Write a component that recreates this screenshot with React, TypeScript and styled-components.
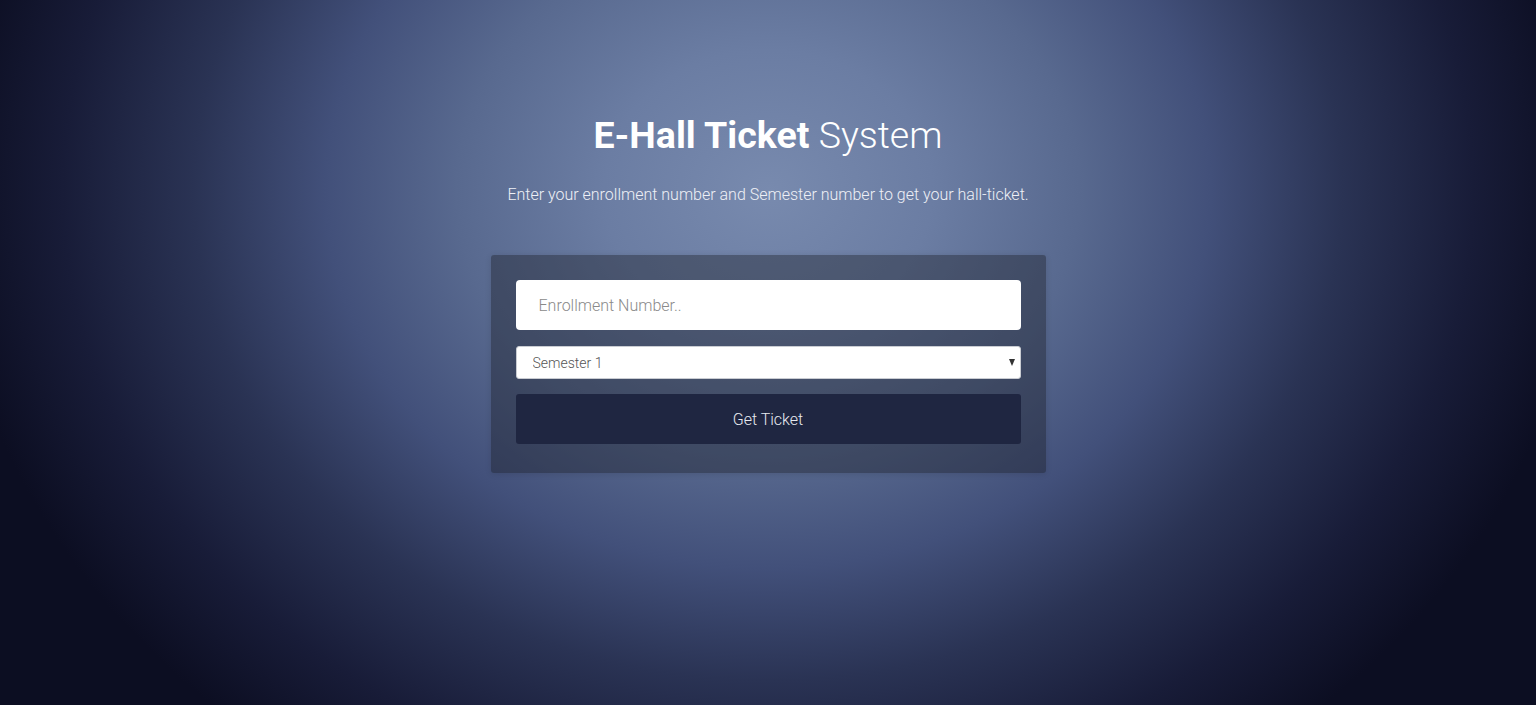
import React from "react";
import styled, { createGlobalStyle } from "styled-components";

const GlobalStyle = createGlobalStyle`
  html, body {
    margin: 0;
    padding: 0;
    height: 100%;
  }
  body {
    font-family: Roboto, "Liberation Sans", sans-serif;
    background: #0c0e22;
  }
  * { box-sizing: border-box; }
`;

const Page = styled.main`
  width: 100%;
  height: 705px;
  overflow: hidden;
  display: flex;
  flex-direction: column;
  align-items: center;
  padding-top: 112px;
  background:
    radial-gradient(
      ellipse 820px 700px at 50% 27%,
      #788aae 0%,
      #6b7da3 20%,
      #58698f 38%,
      #42507a 54%,
      #2a3354 70%,
      #181c38 86%,
      #0c0e22 100%
    );
`;

const Title = styled.h1`
  margin: 0;
  font-family: Roboto, "Liberation Sans", sans-serif;
  font-size: 37.5px;
  line-height: 46px;
  color: #ffffff;
  font-weight: 700;
  letter-spacing: 0;
`;

const Light = styled.span`
  font-weight: 300;
`;

const Subtitle = styled.p`
  margin: 27px 0 0;
  font-family: Roboto, "Liberation Sans", sans-serif;
  font-size: 16px;
  line-height: 20px;
  font-weight: 300;
  color: #eef0f6;
`;

const Card = styled.form`
  margin-top: 50px;
  width: 555px;
  padding: 25px 25px 29px;
  display: flex;
  flex-direction: column;
  gap: 16px;
  background: rgba(24, 27, 36, 0.4);
  border-radius: 3px;
  box-shadow: 0 1px 6px rgba(0, 0, 0, 0.12);
`;

const TextInput = styled.input`
  height: 50px;
  width: 100%;
  border: none;
  border-radius: 4px;
  background: #ffffff;
  padding: 0 23px;
  font-family: Roboto, "Liberation Sans", sans-serif;
  font-size: 16px;
  font-weight: 300;
  color: #333;
  outline: none;
  &::placeholder {
    color: #8a8a8a;
  }
`;

const SelectWrap = styled.div`
  position: relative;
  width: 100%;
`;

const Select = styled.select`
  appearance: none;
  -webkit-appearance: none;
  width: 100%;
  height: 33px;
  border: 1px solid #c9ccd2;
  border-radius: 3px;
  background: #ffffff;
  padding: 0 16px;
  font-family: Roboto, "Liberation Sans", sans-serif;
  font-size: 14px;
  font-weight: 300;
  color: #555;
  outline: none;
`;

const Arrow = styled.span`
  position: absolute;
  right: 6px;
  top: 13px;
  width: 0;
  height: 0;
  border-left: 3.5px solid transparent;
  border-right: 3.5px solid transparent;
  border-top: 7px solid #333;
  pointer-events: none;
`;

const Button = styled.button`
  height: 50px;
  width: 100%;
  margin-top: -1px;
  border: none;
  border-radius: 3px;
  background: #1f2641;
  color: #e8eaf0;
  font-family: Roboto, "Liberation Sans", sans-serif;
  font-size: 16px;
  font-weight: 300;
  cursor: pointer;
`;

export default function App() {
  return (
    <>
      <GlobalStyle />
      <Page>
        <Title>
          E-Hall Ticket <Light>System</Light>
        </Title>
        <Subtitle>
          Enter your enrollment number and Semester number to get your hall-ticket.
        </Subtitle>
        <Card onSubmit={(e) => e.preventDefault()}>
          <TextInput type="text" placeholder="Enrollment Number.." />
          <SelectWrap>
            <Select defaultValue="1">
              <option value="1">Semester 1</option>
              <option value="2">Semester 2</option>
              <option value="3">Semester 3</option>
              <option value="4">Semester 4</option>
              <option value="5">Semester 5</option>
              <option value="6">Semester 6</option>
              <option value="7">Semester 7</option>
              <option value="8">Semester 8</option>
            </Select>
            <Arrow />
          </SelectWrap>
          <Button type="submit">Get Ticket</Button>
        </Card>
      </Page>
    </>
  );
}
